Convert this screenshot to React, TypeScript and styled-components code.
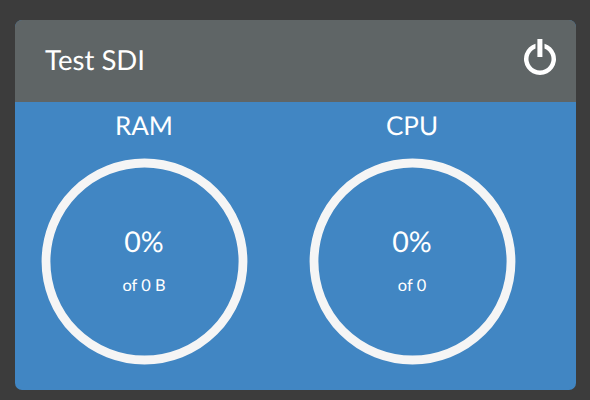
import React from 'react';
import styled, { createGlobalStyle } from 'styled-components';

const GlobalStyle = createGlobalStyle`
  * { box-sizing: border-box; }
  body {
    margin: 0;
    background: #3c3c3c;
    font-family: Lato, sans-serif;
    color: #fff;
    text-rendering: geometricPrecision;
  }
`;

const Page = styled.main`
  height: 400px;
  padding: 20px 14px 10px 15px;
`;

const Card = styled.section`
  height: 370px;
  display: flex;
  flex-direction: column;
  border-radius: 7px;
  overflow: hidden;
  background: #4186c3;
`;

const Header = styled.header`
  height: 82px;
  display: flex;
  align-items: center;
  justify-content: space-between;
  padding: 0 18px 2px 30px;
  background: #5f6566;
`;

const Title = styled.h1`
  margin: 0;
  font-size: 27.6px;
  line-height: 34px;
  font-weight: 400;
`;

const PowerButton = styled.button`
  width: 36px;
  height: 42px;
  padding: 0;
  border: 0;
  background: none;
  color: inherit;
  svg { display: block; }
`;

const Meters = styled.div`
  display: grid;
  grid-template-columns: 206px 206px;
  column-gap: 62px;
  padding: 7px 26px 0;
`;

const Meter = styled.div`
  display: flex;
  flex-direction: column;
  align-items: center;
`;

const Label = styled.h2`
  margin: 0 0 17px;
  font-size: 26px;
  line-height: 32px;
  font-weight: 400;
`;

const Gauge = styled.div`
  display: grid;
  grid-template-columns: 206px;
  width: 206px;
  height: 207px;
  svg, div { grid-area: 1 / 1; }
`;

const Reading = styled.div`
  display: flex;
  flex-direction: column;
  align-items: center;
  padding-top: 66px;
`;

const Percent = styled.span`
  font-size: 28.6px;
  line-height: 36px;
`;

const Total = styled.span`
  margin-top: 15px;
  font-size: 16.4px;
  line-height: 22px;
`;

const meters = [
  { label: 'RAM', percent: 0, total: '0 B' },
  { label: 'CPU', percent: 0, total: '0' },
];

export default function App() {
  return (
    <Page>
      <GlobalStyle />
      <Card>
        <Header>
          <Title>Test SDI</Title>
          <PowerButton aria-label="Power">
            <svg width="36" height="42" viewBox="0 0 36 42" fill="currentColor">
              <path d="M13.5 4.65A16 16 0 1 0 22.5 4.65V9.42A11.5 11.5 0 1 1 13.5 9.42Z" />
              <path d="M15.4 0H20.4V18H15.4Z" />
            </svg>
          </PowerButton>
        </Header>
        <Meters>
          {meters.map((m) => (
            <Meter key={m.label}>
              <Label>{m.label}</Label>
              <Gauge>
                <svg width="207" height="207" viewBox="0 0 207 207" fill="none">
                  <circle cx="103.5" cy="103.5" r="98.5" stroke="#f5f5f5" strokeWidth="8.8" />
                </svg>
                <Reading>
                  <Percent>{m.percent}%</Percent>
                  <Total>of {m.total}</Total>
                </Reading>
              </Gauge>
            </Meter>
          ))}
        </Meters>
      </Card>
    </Page>
  );
}
